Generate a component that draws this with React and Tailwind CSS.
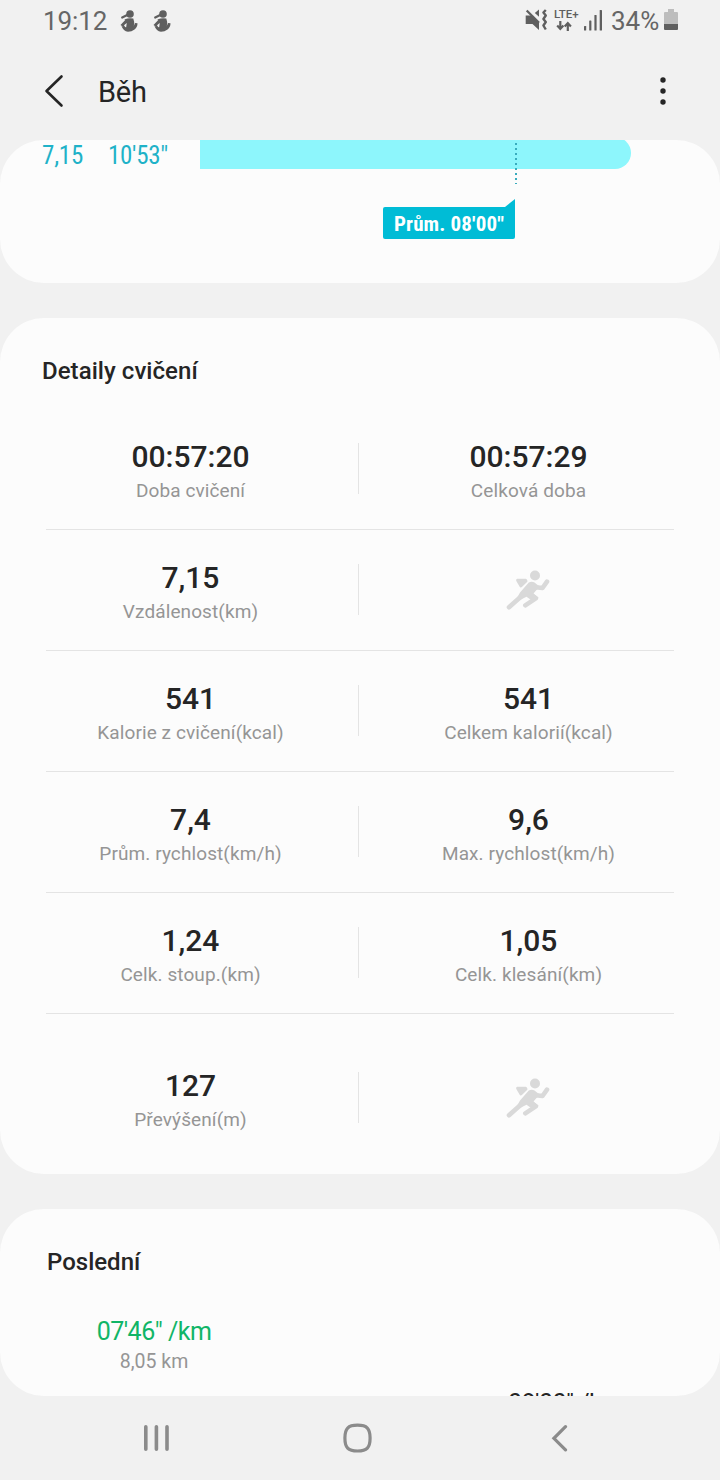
import React from 'react';

const details = [
  [{ value: '00:57:20', label: 'Doba cvičení' }, { value: '00:57:29', label: 'Celková doba' }],
  [{ value: '7,15', label: 'Vzdálenost(km)' }, null],
  [{ value: '541', label: 'Kalorie z cvičení(kcal)' }, { value: '541', label: 'Celkem kalorií(kcal)' }],
  [{ value: '7,4', label: 'Prům. rychlost(km/h)' }, { value: '9,6', label: 'Max. rychlost(km/h)' }],
  [{ value: '1,24', label: 'Celk. stoup.(km)' }, { value: '1,05', label: 'Celk. klesání(km)' }],
  [{ value: '127', label: 'Převýšení(m)' }, null],
];

function PersonIcon() {
  return (
    <svg width="20" height="22" viewBox="0 0 20 22" fill="#5f5f5f">
      <circle cx="11" cy="4" r="3.800" />
      <path d="M5.500 9.600Q10 7.400 14.300 8.600L15.200 12l-.7 8H6.800l.4-3 .5-3.500z" />
      <path d="M1.500 15L6.500 9.800l1.800 2.700-3.300 2.800 2.500 4z" />
      <path d="M2.500 16Q9 18.500 13.500 17.300q2-1.500 2.400-4.300l2.600.2q0 4-3 6.200-2.800 2.300-6.500 2.300-4.700-.4-6.500-5.700z" />
      <path d="M3.200 7.600l5-2.500" stroke="#5f5f5f" strokeWidth="2.200" strokeLinecap="round" />
    </svg>
  );
}

function MuteVibrateIcon() {
  return (
    <svg width="23" height="22" viewBox="0 0 23 22" fill="#5f5f5f">
      <path d="M.7 6.500h6L14 13.700V21l-6.500-6H.7z" />
      <path d="M9.800 4L14 .5v7.300z" />
      <path d="M1.700 1.500l12.300 12.300" stroke="#5f5f5f" strokeWidth="2.300" />
      <path
        d="M20.800 1l-2.400 2.500 2.400 3-2.400 3.500 2.400 3-2.400 3.500 2.400 4"
        fill="none"
        stroke="#5f5f5f"
        strokeWidth="2.400"
        strokeLinejoin="round"
      />
    </svg>
  );
}

function DataArrows() {
  return (
    <svg width="16" height="10" viewBox="0 0 16 10" fill="none" stroke="#5f5f5f" strokeWidth="2.200">
      <path d="M4.300 0v8M1.200 4.500l3.100 3.400 3.100-3.400M11.800 10V2M8.700 5.500l3.100-3.400 3.100 3.400" />
    </svg>
  );
}

function SignalIcon() {
  return (
    <svg width="18" height="21" viewBox="0 0 18 21" fill="#5f5f5f">
      <rect x="0" y="16" width="2.200" height="4.500" rx=".6" />
      <rect x="5.200" y="10.500" width="2.200" height="10" rx=".6" />
      <rect x="10.400" y="5" width="2.200" height="15.500" rx=".6" />
      <rect x="15.700" y="0" width="2.300" height="20.500" rx=".6" />
    </svg>
  );
}

function BatteryIcon() {
  return (
    <svg width="14" height="21" viewBox="0 0 14 21">
      <path d="M4 0h6v3h3a1 1 0 0 1 1 1v11H0V4a1 1 0 0 1 1-1h3z" fill="#bdbdbd" />
      <path d="M0 15h14v5a1 1 0 0 1-1 1H1a1 1 0 0 1-1-1z" fill="#5f5f5f" />
    </svg>
  );
}

function RunnerIcon() {
  return (
    <svg width="44" height="42" viewBox="0 0 44 42" fill="#d9d9d9">
      <circle cx="29" cy="6.500" r="5" />
      <path
        d="M11.500 11.200h8l.6.800-5.200 5z"
        stroke="#d9d9d9"
        strokeWidth="2.800"
        strokeLinejoin="round"
      />
      <path
        d="M41 12.700l-4.500 6.300-6.800-.7M3 38.300l13.500-12M19.300 36.300l10.500-7-7.300-5.500"
        fill="none"
        stroke="#d9d9d9"
        strokeWidth="4.600"
        strokeLinecap="round"
        strokeLinejoin="round"
      />
      <path d="M22.800 13.400c1.600-.9 4.200-1 5.700.1l5 4-6 7 5.200 4.200-5.700 3.500-6.500-4.500-6 3-3.500-1.800 3-5.400z" />
    </svg>
  );
}

function StatusBar() {
  return (
    <div className="flex h-[42px] items-center pl-[43px] pr-[42px] text-[26px] leading-[42px] text-[#666666]">
      <span className="w-[76px] tracking-[-0.1px]">19:12</span>
      <div className="flex gap-[13px] pb-px">
        <PersonIcon />
        <PersonIcon />
      </div>
      <div className="ml-auto flex items-center">
        <div className="pb-[3px]"><MuteVibrateIcon /></div>
        <div className="ml-[6px] flex w-[25px] flex-col gap-px pb-[2px]">
          <span className="text-[11.500px] leading-[11px] font-medium text-[#5f5f5f]">LTE+</span>
          <div className="pl-[2px]"><DataArrows /></div>
        </div>
        <div className="ml-[5px] pb-[2px]"><SignalIcon /></div>
        <span className="ml-[9px] w-[49px]">34%</span>
        <div className="ml-[4px] pb-[3px]"><BatteryIcon /></div>
      </div>
    </div>
  );
}

function Header() {
  return (
    <header className="flex h-[98px] items-center pl-[44px] pr-[54px]">
      <svg width="20" height="34" viewBox="0 0 20 34" fill="none" stroke="#252525" strokeWidth="2.600" strokeLinecap="round" strokeLinejoin="round">
        <path d="M17.500 2.500L2.500 17l15 14.500" />
      </svg>
      <h1 className="ml-[34px] pt-[2px] text-[29px] leading-[40px] tracking-[-0.2px] text-[#252525]">Běh</h1>
      <svg width="6" height="28" viewBox="0 0 6 28" fill="#252525" className="ml-auto">
        <circle cx="3" cy="3" r="2.700" />
        <circle cx="3" cy="14" r="2.700" />
        <circle cx="3" cy="25" r="2.700" />
      </svg>
    </header>
  );
}

function PaceCard() {
  return (
    <section className="relative h-[143px] overflow-hidden rounded-[44px] bg-[#fcfcfc] font-['Roboto_Condensed','Roboto',sans-serif] font-stretch-condensed">
      <div className="flex h-[29px] items-end text-[25px] leading-[26px] text-[#1fb2c8]">
        <span className="ml-[42px] w-[66px] tracking-[-0.2px]">7,15</span>
        <span className="w-[92px] tracking-[-0.3px]">10'53"</span>
        <div className="h-[32px] w-[431px] rounded-r-full bg-[#8df6fc]" />
      </div>
      <div className="ml-[383px] mt-[30px] flex w-[132px] flex-col items-end">
        <svg width="10" height="8" viewBox="0 0 10 8" fill="#00bcd6">
          <path d="M10 0v8H0z" />
        </svg>
        <div className="h-[32px] w-full rounded-[2px] rounded-tr-none bg-[#00bcd6] text-center text-[21px] leading-[34px] font-bold tracking-[0.15px] text-white">
          Prům. 08'00"
        </div>
      </div>
      {/* average marker */}
      <svg width="2" height="41" viewBox="0 0 2 41" className="absolute left-[515px] top-[3px]">
        <path d="M1 0v41" stroke="#38acbe" strokeWidth="2" strokeDasharray="2 3" />
      </svg>
    </section>
  );
}

function Stat({ item }) {
  return (
    <div className="pt-[4px] text-center">
      <p className="text-[30px] leading-[36px] font-medium text-[#252525]">{item.value}</p>
      <p className="mt-[4px] text-[19px] leading-[24px] tracking-[0.1px] text-[#959595]">{item.label}</p>
    </div>
  );
}

function DetailsCard() {
  return (
    <section className="h-[856px] rounded-[44px] bg-[#fcfcfc]">
      <h2 className="h-[91px] pl-[42px] pt-[37px] text-[24px] leading-[32px] font-medium tracking-[0.05px] text-[#252525]">
        Detaily cvičení
      </h2>
      {details.map(([left, right], i) => {
        const last = i === details.length - 1;
        return (
          <div key={left.label} className={last ? 'pt-[24px]' : ''}>
            <div className="flex h-[120px] items-center pl-[23px] pr-[22px]">
              <div className="w-[335px]"><Stat item={left} /></div>
              <div className="mb-[2px] h-[51px] w-px bg-[#e4e4e4]" />
              <div className="w-[339px]">
                {right ? <Stat item={right} /> : <div className="flex justify-center pr-px"><RunnerIcon /></div>}
              </div>
            </div>
            {!last && <div className="mx-[46px] h-px bg-[#e4e4e4]" />}
          </div>
        );
      })}
    </section>
  );
}

function RecentCard() {
  return (
    <section className="h-[187px] overflow-hidden rounded-[44px] bg-[#fcfcfc]">
      <h2 className="pl-[47px] pt-[37px] text-[24px] leading-[32px] font-medium text-[#252525]">
        Poslední
      </h2>
      <div className="flex pt-[38px]">
        <div className="ml-[74px] w-[160px] text-center">
          <p className="text-[25px] leading-[32px] tracking-[-0.5px] text-[#10b567]">07'46" /km</p>
          <p className="mt-[2px] text-[19.500px] leading-[24px] text-[#959595]">8,05 km</p>
        </div>
        <div className="ml-[274px] pt-[72px]">
          <p className="text-[25px] leading-[32px] tracking-[-0.5px] whitespace-nowrap text-[#252525]">08'00" /km</p>
        </div>
      </div>
    </section>
  );
}

function NavBar() {
  return (
    <nav className="flex h-[84px] items-center pl-[143px]">
      <svg width="26" height="28" viewBox="0 0 26 28" stroke="#8b8b8b" strokeWidth="3.600" strokeLinecap="round">
        <path d="M2.800 2.800v22.400M13.400 2.800v22.400M24 2.800v22.400" />
      </svg>
      <svg width="30" height="30" viewBox="0 0 30 30" fill="none" stroke="#8b8b8b" strokeWidth="3.200" className="ml-[174px]">
        <path d="M14.500 2.200c9.500 0 12.600 3.300 12.600 12.800S24 28 14.500 28 1.900 24.500 1.900 15 5 2.200 14.500 2.200z" />
      </svg>
      <svg width="18" height="28" viewBox="0 0 18 28" fill="none" stroke="#8b8b8b" strokeWidth="3.200" strokeLinecap="round" className="ml-[178px]">
        <path d="M14.500 2.700L2.900 14.300l11.600 11.600" />
      </svg>
    </nav>
  );
}

export default function App() {
  return (
    <div className="flex h-[1480px] w-[720px] flex-col overflow-hidden bg-[#f1f1f1] font-['Roboto',sans-serif]">
      <StatusBar />
      <Header />
      <main className="flex flex-col gap-[35px]">
        <PaceCard />
        <DetailsCard />
        <RecentCard />
      </main>
      <NavBar />
    </div>
  );
}
